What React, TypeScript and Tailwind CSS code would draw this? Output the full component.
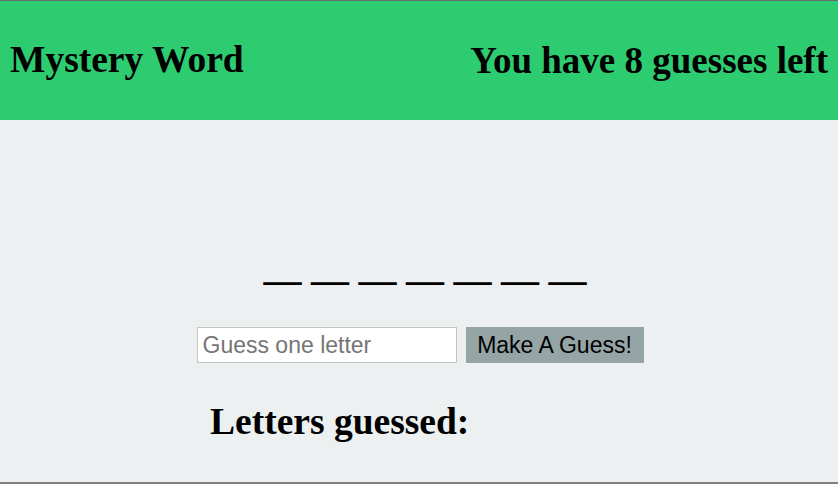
const BLANKS = 7;

export default function App() {
  return (
    <div className="h-[484px] w-full overflow-hidden border-t border-b-2 border-t-[#6b6b6b] border-b-[#808080] bg-[#ecf0f1] font-['Liberation_Serif',serif] text-black">
      {/* Header */}
      <header className="flex h-[119px] items-center justify-between bg-[#2ecc71] px-[10px]">
        <h1 className="text-[37.5px] font-bold">Mystery Word</h1>
        <h1 className="text-[37px] font-bold">You have 8 guesses left</h1>
      </header>

      {/* Word blanks */}
      <div className="pt-[125px] pl-[12px] text-center text-[38px] leading-[44px] font-bold">
        {Array.from({ length: BLANKS }).map((_, i) => (
          <span key={i}>{i > 0 ? ' ' : ''}__</span>
        ))}
      </div>

      {/* Guess form */}
      <div className="mt-[38px] flex items-center justify-center gap-[9px] pl-[2px] font-['Liberation_Sans',sans-serif]">
        <input
          placeholder="Guess one letter"
          className="h-[36px] w-[260px] border border-[#c4c4c4] bg-white px-[5px] text-[23px] outline-none placeholder:text-[#757575]"
        />
        <button className="h-[36px] w-[178px] bg-[#95a5a6] text-[23px] text-black">Make A Guess!</button>
      </div>

      {/* Guessed letters */}
      <div className="ml-[210px] mt-[31px]">
        <h2 className="text-[37.5px] font-bold">Letters guessed:</h2>
      </div>
    </div>
  );
}
